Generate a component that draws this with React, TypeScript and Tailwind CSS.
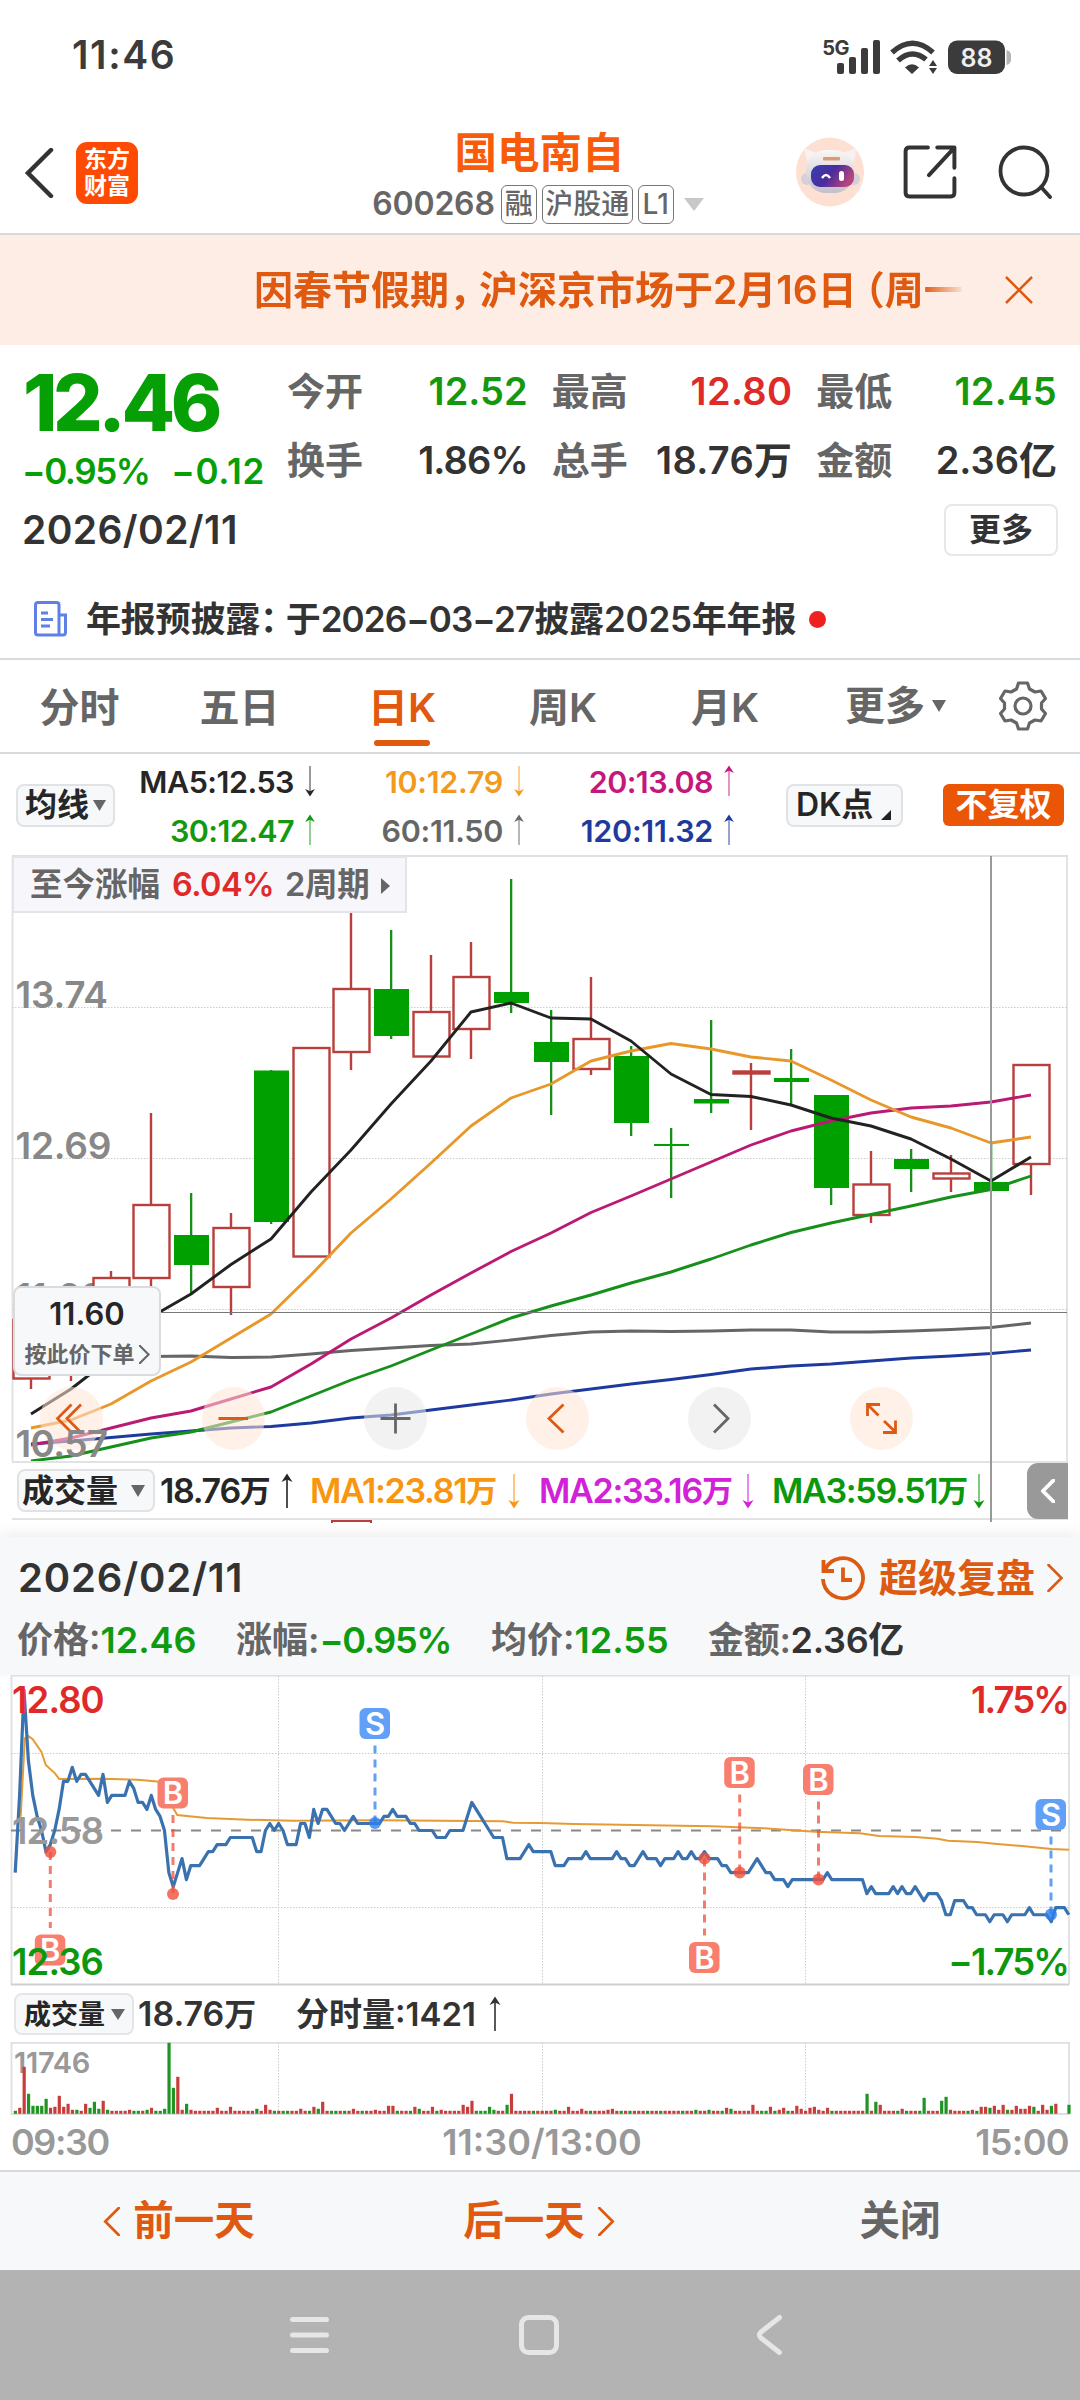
/**
 * Stock detail screen: quote summary, daily K chart and intraday replay panel.
 */

import type { ReactNode } from "react";

type Candle = {
  x: number;
  high: number;
  low: number;
  top: number;
  bottom: number;
  up: boolean;
};

const UP = "#b93f3c";
const DOWN = "#00a000";

function candle(
  x: number,
  high: number,
  low: number,
  top: number,
  bottom: number,
  up: boolean,
): Candle {
  return { x, high, low, top, bottom, up };
}

const CANDLES: Candle[] = [
  candle(31, 1300, 1389, 1320, 1378.5, true),
  candle(71, 1300, 1381, 1310, 1360, true),
  candle(111, 1271, 1310, 1278, 1305, true),
  candle(151, 1113, 1295, 1205, 1278, true),
  candle(191, 1193, 1295, 1235, 1265, false),
  candle(231, 1213, 1315, 1228, 1287, true),
  candle(271, 1070, 1224, 1070.5, 1222, false),
  candle(311, 1048, 1257, 1048, 1256.5, true),
  candle(351, 880, 1070, 989, 1052, true),
  candle(391, 930, 1039, 989, 1036, false),
  candle(431, 955, 1057, 1012, 1056.5, true),
  candle(471, 942, 1059, 977, 1029, true),
  candle(511, 879, 1013, 992, 1003, false),
  candle(551, 1010, 1115, 1042, 1062, false),
  candle(591, 977, 1075, 1039, 1069, true),
  candle(631, 1046, 1136, 1056, 1123, false),
  candle(671, 1128, 1198, 1144, 1146, false),
  candle(711, 1020, 1113, 1099, 1103.5, false),
  candle(751, 1063, 1130, 1071.5, 1073.5, true),
  candle(791, 1049, 1105, 1078, 1082, false),
  candle(831, 1095, 1205, 1095, 1188, false),
  candle(871, 1151, 1223, 1184.5, 1215, true),
  candle(911, 1149, 1192, 1159, 1169, false),
  candle(951, 1155, 1192, 1173.5, 1178.5, true),
  candle(991, 1143, 1191, 1182, 1191, false),
  candle(1031, 1065, 1195, 1065, 1164, true),
];

// One value per candle, in chart coordinates.
const MOVING_AVERAGES = [
  {
    color: "#1f3a9e",
    ys: [1444, 1441, 1437.5, 1434, 1431, 1428, 1426.5, 1423, 1418, 1415, 1410, 1405, 1400, 1394, 1389, 1384, 1379.5, 1374.5, 1369, 1366, 1364, 1361, 1358, 1356, 1353.5, 1350],
  },
  {
    color: "#666666",
    ys: [1358, 1358, 1357, 1356.5, 1356, 1357.5, 1357, 1354, 1350.5, 1348, 1345.5, 1344, 1340, 1335.5, 1332, 1331, 1331.5, 1331, 1330, 1330, 1332, 1332, 1331, 1329.5, 1327.5, 1323],
  },
  {
    color: "#16901a",
    ys: [1461, 1456, 1447, 1438, 1432, 1422, 1412, 1396, 1380, 1366, 1350, 1334, 1318, 1306, 1295, 1283, 1272, 1259, 1245, 1232.5, 1223, 1214.5, 1206, 1197, 1189.5, 1176],
  },
  {
    color: "#bb1a74",
    ys: [1445, 1438, 1428, 1418, 1411, 1399, 1387, 1364, 1339, 1318, 1295, 1273, 1251.5, 1233, 1212.5, 1196, 1179, 1162, 1145, 1131, 1121, 1113, 1108, 1106, 1102, 1095],
  },
  {
    color: "#e8982a",
    ys: [1428, 1420, 1404, 1381, 1362, 1338, 1314, 1275, 1233, 1199, 1163, 1126, 1098, 1084, 1061, 1051, 1043.5, 1049, 1057, 1061, 1080, 1100, 1117, 1128, 1143, 1137],
  },
  {
    color: "#222222",
    ys: [1414, 1389, 1358, 1317, 1294, 1264.5, 1239, 1192, 1150, 1104, 1061, 1012, 1003, 1018, 1019, 1041, 1074, 1094.5, 1096.5, 1105, 1118, 1126, 1139, 1159, 1181, 1157],
  },
];

// Minute prices in cents above 12.00, written as [price, minutes].
const PRICE_RUNS: [number, number][] = [
  [52, 1], [63, 1], [78, 1], [68, 1], [63, 1], [60, 1], [58, 1], [55, 1], [56, 1], [58, 1],
  [61, 1], [65, 2], [67, 1], [65, 1], [66, 2], [65, 1], [64, 1], [63, 1], [66, 1], [62, 1],
  [63, 4], [65, 1], [64, 1], [62, 2], [61, 1], [63, 1], [61, 1], [60, 1], [58, 1], [52, 1],
  [50, 1], [52, 1], [54, 1], [51, 1], [53, 3], [54, 1], [55, 2], [56, 3], [57, 6], [55, 2],
  [58, 1], [59, 1], [58, 1], [59, 1], [58, 1], [56, 3], [59, 2], [57, 1], [61, 1], [59, 1],
  [61, 2], [60, 1], [59, 2], [58, 1], [59, 1], [60, 1], [59, 6], [60, 2], [61, 1], [60, 3],
  [59, 2], [58, 4], [57, 3], [58, 4], [60, 1], [62, 1], [61, 1], [60, 1], [59, 1], [58, 1],
  [57, 3], [54, 4], [55, 1], [56, 1], [55, 5], [53, 3], [54, 4], [55, 1], [54, 6], [55, 1],
  [54, 2], [53, 2], [54, 1], [55, 1], [54, 3], [53, 1], [54, 3], [55, 1], [54, 2], [55, 1],
  [54, 2], [55, 1], [54, 3], [53, 2], [52, 5], [53, 1], [54, 1], [53, 1], [52, 2], [51, 3],
  [50, 1], [51, 8], [52, 1], [51, 8], [49, 1], [50, 1], [49, 4], [50, 1], [49, 1], [50, 1],
  [49, 2], [50, 1], [49, 1], [48, 1], [49, 3], [48, 1], [46, 2], [48, 3], [47, 2], [46, 3],
  [45, 1], [46, 3], [45, 1], [46, 4], [47, 1], [46, 4], [45, 1], [47, 3], [46, 1],
];

const PRICES = PRICE_RUNS.flatMap(([price, count]) => Array<number>(count).fill(price));
const MINUTE = 4.39;

const AVERAGE_LINE =
  "20.7,1816.7 24.8,1738.3 28.2,1736 32.7,1739.3 41.3,1751.7 45.8,1765 55,1773.3 59.2,1779 103,1778.7 137.7,1779.7 165.3,1782.3 170.5,1803.3 177.3,1815 206.6,1818 248,1819.7 292.7,1820.7 378.8,1820.3 502.8,1821.3 513,1822.7 540,1823 574.4,1824 712,1826.3 763.8,1828.3 815.5,1831.7 860,1833.3 879,1836 915.3,1837 937.7,1838.7 948,1840.7 977.3,1842 994.5,1843.7 1022,1846 1051.7,1849 1069,1849.7";

const TRADES = [
  { side: "B", x: 50.3, dot: 1852, badge: 1950 },
  { side: "B", x: 173, dot: 1894, badge: 1793 },
  { side: "S", x: 375, dot: 1823, badge: 1723.5 },
  { side: "B", x: 704.5, dot: 1858.5, badge: 1957.5 },
  { side: "B", x: 739.7, dot: 1872.5, badge: 1772.5 },
  { side: "B", x: 818.5, dot: 1879.5, badge: 1779.5 },
  { side: "S", x: 1051, dot: 1914.5, badge: 1814.5 },
];

// Minutes whose bar stands out; every other minute is drawn at the minimum height.
const TALL_BARS: Record<number, number> = {
  1: 6, 2: 47, 3: 20, 4: 8, 5: 8, 6: 8, 7: 15, 8: 6, 9: 7, 10: 18, 11: 7, 12: 10, 13: 4, 14: 4,
  16: 10, 17: 6, 18: 12, 19: 5, 20: 13, 21: 4, 26: 4, 30: 4, 31: 6, 34: 5, 35: 71, 36: 26,
  37: 37, 38: 4, 39: 10, 40: 4, 46: 6, 49: 7, 55: 5, 57: 9, 58: 4, 65: 5, 68: 7, 69: 5, 70: 12,
  77: 5, 82: 4, 85: 8, 86: 8, 91: 7, 92: 5, 95: 7, 97: 4, 102: 9, 103: 7, 104: 13, 108: 7,
  109: 4, 112: 9, 113: 20, 123: 4, 126: 7, 129: 5, 135: 4, 136: 5, 155: 4, 158: 4, 162: 6,
  163: 5, 168: 9, 172: 7, 174: 4, 175: 6, 178: 8, 179: 5, 181: 6, 182: 7, 183: 4, 185: 6,
  194: 20, 196: 12, 197: 9, 202: 5, 207: 16, 211: 13, 212: 17, 213: 4, 218: 4, 220: 7, 221: 7,
  222: 6, 223: 8, 224: 4, 225: 9, 226: 4, 227: 4, 228: 8, 229: 5, 230: 5, 231: 8, 232: 7,
  234: 9, 235: 4, 236: 8, 237: 10, 240: 9,
};

const DOWN_MINUTES = new Set([
  0, 3, 4, 5, 6, 7, 14, 17, 18, 19, 21, 27, 28, 30, 32, 33, 34, 35, 36, 39, 55, 59, 61, 62, 67,
  69, 72, 73, 75, 79, 87, 90, 92, 96, 105, 106, 107, 108, 109, 112, 118, 123, 131, 138, 140, 144,
  147, 152, 155, 158, 161, 163, 170, 171, 173, 176, 186, 194, 196, 201, 203, 206, 207, 211, 212,
  217, 219, 222, 226, 232, 236, 240,
]);

function LongArrow({
  up = false,
  className = "",
  strong = false,
}: {
  up?: boolean;
  className?: string;
  strong?: boolean;
}) {
  return (
    <svg viewBox="0 0 14 36" className={`h-8 w-[14px] shrink-0 ${className}`} fill="none">
      <g transform={up ? undefined : "rotate(180 7 18)"}>
        <path d="M7 4V35" stroke="currentColor" strokeWidth={strong ? 1.8 : 1.4} opacity={strong ? 0.9 : 0.75} />
        <path d="M7 0.5 12.5 9 7 6.5 1.5 9Z" fill="currentColor" />
      </g>
    </svg>
  );
}

function Triangle({ className }: { className: string }) {
  return (
    <svg viewBox="0 0 14 11" className={`shrink-0 ${className}`} preserveAspectRatio="none">
      <path d="M0 0H14L7 11Z" fill="currentColor" />
    </svg>
  );
}

function Chevron({
  left = false,
  className,
  width = 2.6,
}: {
  left?: boolean;
  className: string;
  width?: number;
}) {
  return (
    <svg viewBox="0 0 16 28" className={`shrink-0 ${className}`} fill="none">
      <path
        d={left ? "M15 1 2 14 15 27" : "M1 1 14 14 1 27"}
        stroke="currentColor"
        strokeWidth={width}
        strokeLinecap="round"
      />
    </svg>
  );
}

function StatusBar() {
  return (
    <div className="flex h-[110px] items-center justify-between pr-[69px] pl-[72px] text-[#3b3b3b]">
      <span className="text-[39px] font-semibold tracking-[1.600px]">11:46</span>
      <div className="flex items-end">
        <span className="mb-[14px] text-[20px] leading-6 font-bold tracking-tight">5G</span>
        <svg viewBox="0 0 174 34" className="-ml-[12px] h-[34px] w-[174px]">
          <g fill="#3b3b3b">
            <rect x="0" y="23" width="7" height="11" rx="2" />
            <rect x="12" y="17" width="7" height="17" rx="2" />
            <rect x="24" y="8" width="7" height="26" rx="2" />
            <rect x="36" y="0" width="7" height="34" rx="2" />
            <path d="M75 34 68 27.500Q75 21 82 27.500Z" />
            <path d="M96 20 100 26H92ZM96 34 92 28H100Z" />
          </g>
          <path d="M55 12.500Q75.500 -6 96 12.500M61 20.500Q75 8 89 19.500" fill="none" stroke="#3b3b3b" strokeWidth="5.500" />
          <rect x="111" y="0.500" width="57" height="33.500" rx="9" fill="#3b3b3b" />
          <path d="M169.500 10q5 1 5 7.500t-5 7.500Z" fill="#b5b5b5" />
          <text x="139.500" y="26.500" fill="#eee" fontSize="25" fontWeight="600" textAnchor="middle">
            88
          </text>
        </svg>
      </div>
    </div>
  );
}

function Robot() {
  return (
    <svg viewBox="0 0 68 70" className="h-[70px] w-[68px]">
      <defs>
        <linearGradient id="visor" x1="0" y1="0" x2="1" y2="0.4">
          <stop offset="0" stopColor="#3a3fb0" />
          <stop offset="0.55" stopColor="#4a2c9c" />
          <stop offset="1" stopColor="#b5457c" />
        </linearGradient>
        <linearGradient id="shell" x1="0" y1="0" x2="0" y2="1">
          <stop offset="0" stopColor="#faf7f7" />
          <stop offset="1" stopColor="#c3c0cc" />
        </linearGradient>
      </defs>
      <ellipse cx="34" cy="35" rx="34" ry="34.500" fill="#fee0d2" />
      <path d="M8 11Q10 22 13 27L23 17ZM60 11Q60 22 55 27L45 17Z" fill="#f6f1f2" />
      <circle cx="11" cy="42" r="6" fill="#d4cfd9" />
      <circle cx="58" cy="42" r="6" fill="#d4cfd9" />
      <rect x="10" y="13" width="48" height="43" rx="20" fill="url(#shell)" />
      <rect x="15" y="28" width="43" height="22" rx="9" fill="url(#visor)" />
      <path d="M26 41q4-6 8 0" stroke="#fff" strokeWidth="2.500" fill="none" />
      <rect x="43" y="34" width="5" height="10" rx="2.500" fill="#fff" />
      <rect x="27" y="20" width="17" height="3.500" rx="1" fill="#dd9a73" />
    </svg>
  );
}

function Badge({ children, className }: { children: ReactNode; className: string }) {
  return (
    <span
      className={`flex h-[39px] items-center justify-center rounded-[6px] border-[1.5px] border-[#777] text-[28px] leading-none font-medium ${className}`}
    >
      {children}
    </span>
  );
}

function Header() {
  return (
    <header className="flex h-[125px] justify-between border-b-2 border-[#d6d8dc] pr-[28px] pl-[24px]">
      <div className="flex w-[300px] items-center pt-[2px]">
        <svg viewBox="0 0 30 50" className="h-[50px] w-[30px]" fill="none" stroke="#333" strokeWidth="4.500">
          <path d="M27 2 4 25 27 48" strokeLinecap="round" />
        </svg>
        <div className="ml-[22px] flex h-[62px] w-[62px] flex-col items-center justify-center rounded-[11px] bg-[#ff4a03] text-[23px] leading-[27px] font-bold text-white">
          <span>东方</span>
          <span>财富</span>
        </div>
      </div>
      <div className="flex flex-col items-center">
        <h1 className="mt-[17px] ml-[3px] text-[42.500px] leading-[52px] font-bold text-[#f85c0a]">国电南自</h1>
        <div className="mt-[5px] flex items-center text-[#666]">
          <span className="mr-[6px] text-[32px] leading-[40px] font-semibold tracking-[-0.2px]">600268</span>
          <Badge className="w-[36px]">融</Badge>
          <Badge className="ml-[5px] w-[91px]">沪股通</Badge>
          <Badge className="ml-[5px] w-[36px]">L1</Badge>
          <Triangle className="ml-[10px] h-[13px] w-[20px] text-[#c8c8c8]" />
        </div>
      </div>
      <div className="flex w-[300px] items-center justify-end">
        <Robot />
        <svg viewBox="0 0 52 52" className="ml-[39px] h-[54px] w-[54px]" fill="none" stroke="#333" strokeWidth="3.800">
          <path d="M24 2.500H6Q2.500 2.500 2.500 6V46Q2.500 49.500 6 49.500H46Q49.500 49.500 49.500 46V32" strokeLinecap="round" />
          <path d="M33 2.500H49.500V22M49.500 2.500 25 29" strokeLinecap="round" strokeLinejoin="round" />
        </svg>
        <svg viewBox="0 0 54 54" className="ml-[41px] h-[54px] w-[54px]" fill="none" stroke="#333" strokeWidth="3.800">
          <circle cx="26" cy="26" r="23.500" />
          <path d="M43 42 52 52" strokeLinecap="round" />
        </svg>
      </div>
    </header>
  );
}

function Notice() {
  return (
    <div className="flex h-[110px] items-center bg-[#fdede4] pl-[254px] text-[#df5a10]">
      <p className="w-[712px] overflow-hidden mask-r-from-94% mask-r-to-100% pt-[1px] text-[39px] font-semibold whitespace-nowrap">
        因春节假期<span className="-mr-[9px]">，</span>沪深京市场于2月16日
        <span className="-ml-[11px]">（</span>周一
      </p>
      <svg viewBox="0 0 28 28" className="ml-[39px] h-7 w-7" stroke="currentColor" strokeWidth="2.500">
        <path d="M1 1 27 27M27 1 1 27" />
      </svg>
    </div>
  );
}

function QuoteCell({
  label,
  value,
  className,
}: {
  label: string;
  value: string;
  className: string;
}) {
  return (
    <div className="flex items-center justify-between">
      <dt className="text-[#666]">{label}</dt>
      <dd className={className}>{value}</dd>
    </div>
  );
}

function QuoteSummary() {
  return (
    <section className="flex h-[313px] flex-col">
      <div className="flex pr-[23px] pl-[23px]">
        <div className="w-[264px] shrink-0 text-[#06a006]">
          <div className="mt-[12px] h-[92px] text-[78px] leading-[92px] font-extrabold tracking-[-4.400px]">12.46</div>
          <div className="mt-px -ml-px flex justify-between pr-[22px] text-[35px] leading-[43px] font-semibold">
            <span className="tracking-[-1.400px]">−0.95%</span>
            <span className="tracking-[0.7px]">−0.12</span>
          </div>
        </div>
        <dl className="mt-[12px] grid flex-1 grid-cols-3 gap-x-[24px] text-[38px] leading-[69px] font-semibold">
          <QuoteCell label="今开" value="12.52" className="text-[#14980f]" />
          <QuoteCell label="最高" value="12.80" className="tracking-[0.3px] text-[#e02a2a]" />
          <QuoteCell label="最低" value="12.45" className="tracking-[0.3px] text-[#14980f]" />
          <QuoteCell label="换手" value="1.86%" className="tracking-[-0.9px] text-[#333]" />
          <QuoteCell label="总手" value="18.76万" className="tracking-[0.3px] text-[#333]" />
          <QuoteCell label="金额" value="2.36亿" className="text-[#333]" />
        </dl>
      </div>
      <div className="mt-[9px] flex h-[52px] items-center justify-between pr-[22px] pl-[22px] text-[#333]">
        <span className="text-[39px] font-semibold tracking-[0.4px]">2026/02/11</span>
        <span className="flex h-[52px] w-[114px] items-center justify-center rounded-[8px] border-2 border-[#e6e7ea] text-[32px] font-semibold">
          更多
        </span>
      </div>
      <div className="mt-[36px] flex h-[54px] items-center pl-[34px]">
        <svg viewBox="0 0 33 36" className="h-9 w-[33px]" fill="none" stroke="#5f80e4" strokeWidth="3">
          <path d="M25 34H4Q1.500 34 1.500 31.500V4Q1.500 1.500 4 1.500H22.500Q25 1.500 25 4V34H29Q31.500 34 31.500 31V14H25" />
          <path d="M7 12H14M7 18.500H19M7 25H16" />
        </svg>
        <span className="ml-[19px] text-[35px] font-semibold tracking-[-0.2px] whitespace-nowrap text-[#333]">
          年报预披露<span className="-mr-[9px]">：</span>于
          <span className="tracking-[-0.9px]">2026−03−27</span>披露2025年年报
        </span>
        <span className="ml-[13px] h-[17px] w-[17px] rounded-full bg-[#f02020]" />
      </div>
    </section>
  );
}

function Tabs() {
  return (
    <nav className="flex h-[96px] border-y-2 border-[#d9dadd] text-[40px] leading-[96px] font-semibold text-[#666]">
      <span className="w-[159px] text-center">分时</span>
      <span className="w-[161px] text-center">五日</span>
      <span className="flex w-[164px] flex-col items-center text-[#e0590f]">
        日K
        <i className="-mt-[16px] h-[6px] w-[56px] rounded-full bg-[#e0590f]" />
      </span>
      <span className="w-[158px] text-center">周K</span>
      <span className="w-[166px] text-center">月K</span>
      <span className="flex w-[178px] items-center pl-[37px]">
        更多
        <Triangle className="ml-[7px] h-[12px] w-[14px]" />
      </span>
      <span className="flex items-center pl-[13px]">
        <svg viewBox="0 0 48 50" className="h-[50px] w-[48px]" fill="none" stroke="#666" strokeWidth="3.200" strokeLinejoin="round">
          <path d="M19.500 2H28.500L30.500 8 36 11 42 10 46.500 17.500 42.500 22V28L46.500 32.500 42 40 36 39 30.500 42 28.500 48H19.500L17.500 42 12 39 6 40 1.500 32.500 5.500 28V22L1.500 17.500 6 10 12 11 17.500 8Z" />
          <circle cx="24" cy="25" r="8" />
        </svg>
      </span>
    </nav>
  );
}

function Average({ text, up, className }: { text: string; up: boolean; className: string }) {
  return (
    <div className={`flex items-center justify-end ${className}`}>
      <span className="mr-[9px]">{text}</span>
      <LongArrow up={up} />
    </div>
  );
}

function AverageLegend() {
  return (
    <section className="flex h-[101px] items-center pt-[1px] pl-[16px]">
      <button className="flex h-[43px] w-[99px] items-center justify-center rounded-[8px] border-2 border-[#e0e2e6] bg-[#f7f8fa] text-[32px] leading-none font-semibold text-[#262626]">
        均线
        <Triangle className="ml-[4px] h-[11px] w-[13px] text-[#666]" />
      </button>
      <div className="grid grid-cols-[202px_209px_210px] pt-[1px] text-[30.500px] leading-[49px] font-semibold tracking-[-0.3px]">
        <Average text="MA5:12.53" up={false} className="tracking-[-0.5px] text-[#262626]" />
        <Average text="10:12.79" up={false} className="text-[#f29a1c]" />
        <Average text="20:13.08" up className="tracking-[-0.6px] text-[#c5187c]" />
        <Average text="30:12.47" up className="tracking-[-0.6px] text-[#14980f]" />
        <Average text="60:11.50" up className="text-[#666]" />
        <Average text="120:11.32" up className="text-[#1f3a9e]" />
      </div>
      <button className="ml-[50px] flex h-[43px] w-[117px] items-center rounded-[8px] border-2 border-[#e0e2e6] bg-[#f7f8fa] pl-[8px] text-[32px] leading-none font-semibold tracking-[-0.2px] text-[#262626]">
        DK点
        <svg viewBox="0 0 10 10" className="mt-[20px] ml-[8px] h-[10px] w-[10px]">
          <path d="M10 0V10H0Z" fill="#222" />
        </svg>
      </button>
      <button className="ml-[40px] flex h-[42px] w-[121px] items-center justify-center rounded-[6px] bg-[#ea5506] text-[32px] leading-none font-bold text-white">
        不复权
      </button>
    </section>
  );
}

function CandleShape({ item }: { item: Candle }) {
  if (item.up) {
    return (
      <g stroke={UP} strokeWidth="2.400" fill="#fff">
        <path d={`M${item.x} ${item.high}V${item.top}M${item.x} ${item.bottom}V${item.low}`} />
        <rect x={item.x - 17.5} y={item.top} width="36" height={item.bottom - item.top} />
      </g>
    );
  }

  return (
    <g fill={DOWN}>
      <rect x={item.x - 1} y={item.high} width="2.300" height={item.low - item.high} fill="#16901a" />
      <rect x={item.x - 17} y={item.top} width="35" height={item.bottom - item.top} />
    </g>
  );
}

function KLineChart() {
  return (
    <svg viewBox="0 855 1080 606" className="h-[606px] w-[1080px]" fill="none">
      <path d="M12 856H1067V1461M12.500 856V1461" stroke="#e0e0e0" strokeWidth="1.800" />
      <path d="M12 1007.500H1067M12 1158.500H1067M12 1309.500H1067" stroke="#ccc" strokeDasharray="1.500 1.500" />
      <g fill="#888" fontSize="37" fontWeight="600" letterSpacing="-0.200">
        <text x="15.500" y="1007.500">13.74</text>
        <text x="15.500" y="1159">12.69</text>
        <text x="15.500" y="1310">11.63</text>
      </g>
      {CANDLES.map((item) => (
        <CandleShape key={item.x} item={item} />
      ))}
      {MOVING_AVERAGES.map((line) => (
        <polyline
          key={line.color}
          points={line.ys.map((y, index) => `${31 + index * 40},${y}`).join(" ")}
          stroke={line.color}
          strokeWidth="2.900"
          strokeLinejoin="round"
        />
      ))}
      <path d="M160 1312.500H1067" stroke="#777" strokeWidth="1" />
      <path d="M991 856V1461" stroke="#999" strokeWidth="2" />

      <g fill="#ffe4d6" fillOpacity="0.55">
        <circle cx="71.500" cy="1418.500" r="31.500" />
        <circle cx="233.500" cy="1418.500" r="31.500" />
        <circle cx="557.500" cy="1418.500" r="31.500" />
        <circle cx="881.500" cy="1418.500" r="31.500" />
      </g>
      <g fill="#e8e8e8" fillOpacity="0.55">
        <circle cx="395.500" cy="1418.500" r="31.500" />
        <circle cx="719.500" cy="1418.500" r="31.500" />
      </g>
      <g stroke="#dd5a14" strokeWidth="2.800">
        <path d="M71.500 1404.500 57.500 1418.500 71.500 1432.500M81 1404.500 67 1418.500 81 1432.500" />
        <path d="M218.500 1418.500H248" strokeWidth="3" />
        <path d="M563.500 1404.500 549 1418.500 563.500 1432.500" />
        <path d="M867.500 1416V1404.500H880M867.500 1404.500 878.500 1415.500M884 1421 895.500 1432M895.500 1420.500V1432.500H883" />
      </g>
      <path d="M395.500 1403.500V1433.500M380.500 1418.500H410.500M714 1404.500 728 1418.500 714 1432.500" stroke="#666" strokeWidth="2.800" />
      <text x="15.500" y="1457" fill="#888" fontSize="37" fontWeight="600" letterSpacing="-0.600">
        10.57
      </text>
    </svg>
  );
}

function KLinePanel() {
  return (
    <section className="relative h-[606px]">
      <KLineChart />
      <div className="absolute top-[1px] left-[12px] flex h-[57px] w-[395px] items-center border-2 border-[#e3e4e8] bg-[#f7f7fb] pt-[2px] pl-[16px] text-[32.500px] font-semibold text-[#666]">
        至今涨幅
        <span className="ml-[12px] tracking-[-0.6px] text-[#e02a2a]">6.04%</span>
        <span className="ml-[11px] tracking-[-0.3px]">2周期</span>
        <svg viewBox="0 0 9 16" className="ml-[12px] h-4 w-[9px]">
          <path d="M0 0 9 8 0 16Z" fill="#666" />
        </svg>
      </div>
      <div className="absolute top-[431px] left-[13px] flex h-[90px] w-[148px] flex-col items-center rounded-[8px] border-2 border-[#d9dcdf] bg-[#f7f8fa]">
        <span className="mt-[5px] text-[31px] leading-[42px] font-semibold text-[#262626]">11.60</span>
        <span className="flex items-center text-[22px] leading-[38px] font-semibold whitespace-nowrap text-[#666]">
          按此价下单
          <Chevron className="ml-[4px] h-[19px] w-[11px]" width={3} />
        </span>
      </div>
    </section>
  );
}

function VolumeLegend() {
  return (
    <section className="relative mr-[12px] ml-[12px] flex h-[59px] items-center border-y-2 border-[#e2e2e2] pl-[5px] text-[34px] leading-none font-semibold tracking-[-1.300px]">
      <button className="flex h-[43px] w-[138px] shrink-0 items-center rounded-[8px] border-2 border-[#e0e2e6] bg-[#f7f8fa] pl-[3px] text-[32px] leading-none tracking-normal text-[#262626]">
        成交量
        <Triangle className="ml-[13px] h-[12px] w-[14px] text-[#666]" />
      </button>
      <span className="ml-[5px] flex w-[150px] shrink-0 items-center text-[#262626]">
        18.76<span className="text-[31px]">万</span>
        <LongArrow up strong className="ml-[10px] h-9" />
      </span>
      <span className="flex w-[229px] shrink-0 items-center text-[#f8960f]">
        MA1:23.81<span className="text-[31px]">万</span>
        <LongArrow className="ml-[11px] h-9" />
      </span>
      <span className="flex w-[233px] shrink-0 items-center text-[#d122d8]">
        MA2:33.16<span className="text-[31px]">万</span>
        <LongArrow className="ml-[9px] h-9" />
      </span>
      <span className="flex shrink-0 items-center text-[#0c980c]">
        MA3:59.51<span className="text-[31px]">万</span>
        <LongArrow className="ml-[5px] h-9" />
      </span>
      <i className="absolute top-[-2px] left-[978px] h-[61px] w-[2px] bg-[#999]" />
      <span className="absolute top-0 right-0 flex h-[56px] w-[41px] items-center justify-center rounded-l-[11px] bg-[#999] text-white">
        <Chevron left className="h-[24px] w-[14px]" width={4.5} />
      </span>
    </section>
  );
}

function ReplayHeader() {
  return (
    <section className="h-[138px] rounded-t-[6px] bg-[#f7f8fa] pt-[11px] shadow-[0_-4px_14px_rgb(0_0_0_/_0.07)]">
      <div className="flex h-[60px] items-center justify-between pr-[16px] pl-[18px]">
        <span className="text-[40px] font-semibold tracking-[0.8px] text-[#333]">2026/02/11</span>
        <span className="flex items-center text-[39px] font-semibold text-[#dd5a12]">
          <svg viewBox="0 0 46 46" className="mr-[13px] h-[46px] w-[46px]" fill="none" stroke="currentColor" strokeWidth="3.800">
            <path d="M5 14.500A20 20 0 1 1 3 24" />
            <path d="M3.500 5V16H14" />
            <path d="M23 12.500V25H32" />
          </svg>
          超级复盘
          <Chevron className="ml-[12px] h-[28px] w-[17px]" />
        </span>
      </div>
      <div className="flex h-[64px] items-center pl-[17px] text-[36px] font-semibold text-[#333]">
        <span className="w-[219px] text-[#0f9b0f]">
          <span className="text-[#666]">价格:</span>12.46
        </span>
        <span className="w-[255px] text-[#0f9b0f]">
          <span className="text-[#666]">涨幅:</span>
          <span className="tracking-[-1.400px]">−0.95%</span>
        </span>
        <span className="w-[217px] text-[#0f9b0f]">
          <span className="text-[#666]">均价:</span>12.55
        </span>
        <span className="tracking-[-0.3px]">
          <span className="text-[#666]">金额:</span>2.36亿
        </span>
      </div>
    </section>
  );
}

function TradeMarker({ side, x, dot, badge }: { side: string; x: number; dot: number; badge: number }) {
  const color = side === "B" ? "#f0503c" : "#2f80f0";
  const start = badge < dot ? badge + 22 : dot;
  const end = badge < dot ? dot : badge - 22;

  return (
    <g>
      <path
        d={`M${x} ${start}V${end}`}
        stroke={color}
        strokeWidth="3"
        strokeDasharray="8 6"
        opacity="0.75"
      />
      <circle cx={x} cy={dot} r="6" fill={color} opacity="0.8" />
      <rect
        x={x - 15.5}
        y={badge - 15.5}
        width="30.500"
        height="31"
        rx="6"
        fill={side === "B" ? "#f87e6e" : "#62a0f8"}
      />
      <text x={x} y={badge + 11} fontSize="31" fontWeight="600" fill="#fff" textAnchor="middle">
        {side}
      </text>
    </g>
  );
}

function IntradayChart() {
  const points = PRICES.map(
    (price, minute) => `${15.2 + minute * MINUTE},${1830.5 - (price - 58) * 7.02}`,
  ).join(" ");

  return (
    <svg viewBox="0 1675 1080 311" className="h-[311px] w-[1080px]" fill="none">
      <path d="M11 1675.500H1069V1984.500M11.500 1675.500V1984.500" stroke="#dedfe2" strokeWidth="1.800" />
      <path d="M11 1984.500H1069" stroke="#d0d0d0" strokeWidth="2" />
      <path
        d="M11 1753.500H1069M11 1907.500H1069M278.500 1676V1984M542.500 1676V1984M805.500 1676V1984"
        stroke="#ccc"
        strokeDasharray="1.500 1.500"
      />
      <path d="M11 1830.500H1062" stroke="#888" strokeWidth="2" strokeDasharray="10 10" />
      <polyline points={AVERAGE_LINE} stroke="#e59b33" strokeWidth="2" />
      <polyline points={points} stroke="#3a72b0" strokeWidth="3.200" strokeLinejoin="round" />
      {TRADES.map((trade) => (
        <TradeMarker key={trade.x} {...trade} />
      ))}
      <g fontSize="36.500" fontWeight="600">
        <g letterSpacing="-0.900">
          <text x="12" y="1713" fill="#e02a2a">12.80</text>
          <text x="12" y="1844" fill="#999">12.58</text>
          <text x="12" y="1974.500" fill="#0c980c">12.36</text>
        </g>
        <g letterSpacing="-1.900" textAnchor="end">
          <text x="1068" y="1713" fill="#e02a2a">1.75%</text>
          <text x="1068" y="1974.500" fill="#0c980c">−1.75%</text>
        </g>
      </g>
    </svg>
  );
}

function IntradayVolume() {
  return (
    <section>
      <div className="flex h-[56px] items-center pl-[14px] text-[34px] leading-none font-semibold text-[#333]">
        <button className="flex h-[42px] w-[120px] items-center rounded-[8px] border-2 border-[#e3e5e8] bg-[#f7f8fa] pl-[8px] text-[27px] leading-none text-[#262626]">
          成交量
          <Triangle className="ml-[6px] h-[11px] w-[14px] text-[#666]" />
        </button>
        <span className="ml-[4px] w-[158px]">
          18.76<span className="text-[32px]">万</span>
        </span>
        <span className="text-[33px]">分时量:1421</span>
        <LongArrow up strong className="ml-[12px] h-9" />
      </div>
      <svg viewBox="0 2042 1080 74" className="h-[74px] w-[1080px]" fill="none">
        <path d="M11 2042.800H1069V2114H11.500V2042" stroke="#dedfe2" strokeWidth="1.800" />
        <path d="M278.500 2043V2113M542.500 2043V2113M805.500 2043V2113" stroke="#ccc" strokeDasharray="1.500 1.500" />
        <text x="14" y="2073" fill="#999" fontSize="29" fontWeight="600" letterSpacing="-0.300">
          11746
        </text>
        {PRICES.map((_, minute) => {
          if (minute === 238 || minute === 239) return null;
          const height = TALL_BARS[minute] ?? 3;
          return (
            <rect
              key={minute}
              x={13.8 + minute * MINUTE}
              y={2113.8 - height}
              width="3.200"
              height={height}
              fill={DOWN_MINUTES.has(minute) ? "#1f9422" : "#c83c3a"}
            />
          );
        })}
      </svg>
      <div className="flex h-[54px] items-center justify-between pr-[11px] pb-[2px] pl-[11px] text-[36px] font-semibold text-[#999]">
        <span className="w-[120px] tracking-[-1.400px]">09:30</span>
        <span className="pl-[4px]">11:30/13:00</span>
        <span className="w-[120px] text-right tracking-[-0.6px]">15:00</span>
      </div>
    </section>
  );
}

function DayActions() {
  return (
    <footer className="grid h-[100px] grid-cols-3 border-t-2 border-[#d6d8dc] bg-[#f7f8fa] pt-[1px] text-[40.500px] font-bold text-[#df5a10]">
      <span className="flex items-center justify-center gap-[13px] pr-[2px]">
        <Chevron left className="h-[29px] w-[17px]" />
        前一天
      </span>
      <span className="flex items-center justify-center gap-[13px] pr-[2px]">
        后一天
        <Chevron className="h-[29px] w-[17px]" />
      </span>
      <span className="flex items-center justify-center text-[#666]">关闭</span>
    </footer>
  );
}

function SystemNav() {
  return (
    <div className="flex h-[130px] items-center bg-[#b3b3b3] pl-[288px]">
      <svg viewBox="0 0 500 44" className="h-[44px] w-[500px]" fill="none" stroke="#e6e6e6" strokeWidth="5" strokeLinecap="round" strokeLinejoin="round">
        <path d="M4.500 6.500H38.500M4.500 22H38.500M4.500 37.500H38.500" />
        <rect x="233.500" y="4.500" width="35" height="35" rx="7" />
        <path d="M491.500 4.500 473 19Q470 22 473 25L491.500 39.500" />
      </svg>
    </div>
  );
}

export default function App() {
  return (
    <main
      lang="zh-CN"
      className="h-[2400px] w-[1080px] overflow-hidden bg-white font-['Inter','Noto_Sans_CJK_SC',sans-serif]"
    >
      <StatusBar />
      <Header />
      <Notice />
      <QuoteSummary />
      <Tabs />
      <AverageLegend />
      <KLinePanel />
      <VolumeLegend />
      <div className="h-[17px] pl-[331px]">
        <i className="block h-[3px] w-[41px] border-x-2 border-t-2 border-[#b93f3c]" />
      </div>
      <ReplayHeader />
      <IntradayChart />
      <IntradayVolume />
      <DayActions />
      <SystemNav />
    </main>
  );
}
